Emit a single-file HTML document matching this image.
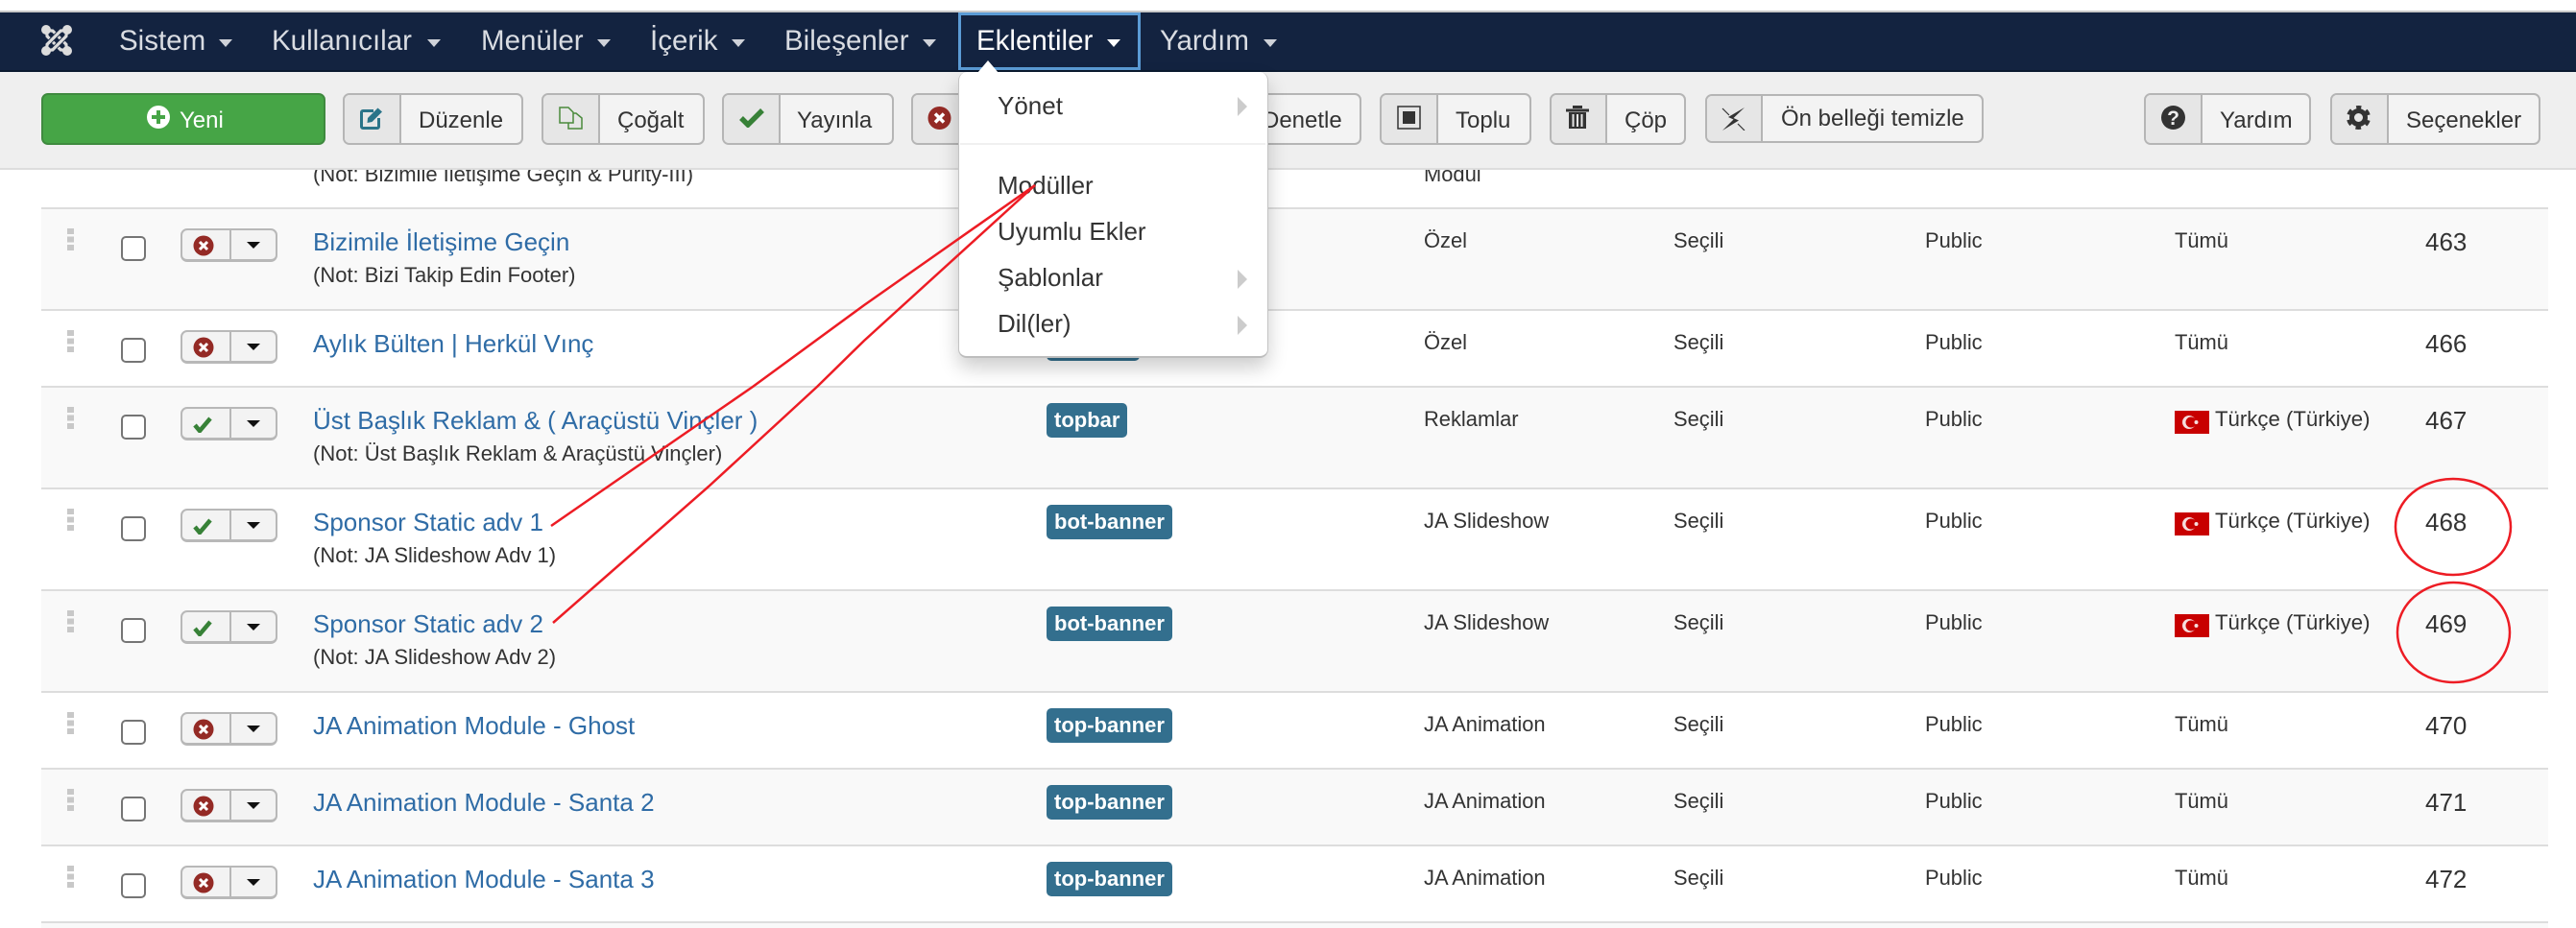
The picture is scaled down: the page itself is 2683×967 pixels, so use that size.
<!DOCTYPE html>
<html lang="tr">
<head>
<meta charset="utf-8">
<title>Modüller</title>
<style>
html,body{margin:0;padding:0;background:#fff}
#p{position:relative;width:2683px;height:967px;overflow:hidden;background:#fff;font-family:"Liberation Sans",Arial,sans-serif;color:#333;white-space:nowrap}
#p div,#p span,#p svg,#p a{position:absolute;display:block}
.nav{left:0;top:11px;width:2683px;height:60px;background:#132340;border-top:2px solid #c9c9c9;border-bottom:2px solid #0b1a30}
.ni{top:23px;height:40px;line-height:40px;font-size:29.5px;color:#d9dce2}
.nc{top:41px;width:0;height:0;border-left:7px solid transparent;border-right:7px solid transparent;border-top:8px solid #cfd2d9}
.tb{left:0;top:75px;width:2683px;height:100px;background:#efefef;border-bottom:2px solid #ddd}
.btn{top:97px;height:50px;background:#f3f3f3;border:2px solid #b5b5b5;border-radius:7px;box-sizing:content-box;overflow:hidden}
.ic{left:0;top:0;height:50px;background:#e6e6e6;border-right:2px solid #b5b5b5}
.bt{top:106px;height:40px;line-height:40px;font-size:24px;color:#333}
.row{left:43px;width:2611px;background:#fff}
.alt{background:#f9f9f9}
.ln{left:43px;width:2611px;height:2px;background:#ddd}
.h{left:27px;top:20px;width:7px;height:6px;background:#c8c8c8;box-shadow:0 8.5px 0 #c8c8c8,0 17px 0 #c8c8c8}
.c{left:83px;top:28px;width:22px;height:22px;border:2px solid #757575;border-radius:5px;background:#fff}
.s{left:145px;top:20px;width:97px;height:30px;border:2px solid #b8b8b8;border-bottom-width:3px;border-radius:7px;background:#f3f3f3}
.d{left:49px;top:0;width:2px;height:30px;background:#b8b8b8}
.ca{left:214px;top:34px;width:0;height:0;border-left:7.5px solid transparent;border-right:7.5px solid transparent;border-top:7.5px solid #111}
.t{left:283px;top:14px;height:40px;line-height:40px;font-size:26px;color:#2f6ca6}
.n{left:283px;top:49px;height:40px;line-height:40px;font-size:22px;color:#333}
.b{left:1047px;top:16px;height:36px;line-height:36px;padding:0 8px;background:#336f8e;border-radius:5px;color:#fff;font-weight:bold;font-size:22px}
.x{top:13px;height:40px;line-height:40px;font-size:21.9px;color:#333}
.x1{left:1440px}.x2{left:1700px}.x3{left:1962px}.x4{left:2222px}.x4f{left:2264px;font-size:22.2px}
.id{left:2483px;top:14px;height:40px;line-height:40px;font-size:26px;color:#333}
.fl{left:2222px;top:24px;width:36px;height:24px}
.dd{left:998px;top:75px;width:321px;height:296px;background:#fff;border-radius:9px;border:1px solid #c4c4c4;border-top:0;border-bottom:2px solid #bdbdbd;box-shadow:0 10px 20px rgba(0,0,0,.2)}
.di{left:1039px;height:40px;line-height:40px;font-size:26px;color:#333}
.da{left:1289px;width:0;height:0;border-top:10px solid transparent;border-bottom:10px solid transparent;border-left:10px solid #ccc}
</style>
</head>
<body>
<div id="p">

<!-- table rows -->
<div class="row" style="top:160px;height:56px"><div class="n" style="top:2px">(Not: Bizimile İletişime Geçin &amp; Purity-III)</div><div class="x x1" style="top:2px">Modül</div></div>
<div class="ln" style="top:216px"></div>

<div class="row alt" style="top:218px;height:104px">
<div class="h"></div><div class="c"></div>
<div class="s"><div class="d"></div><svg style="left:11px;top:5px" width="22" height="22" viewBox="0 0 22 22"><circle cx="11" cy="11" r="10.5" fill="#942a25"/><path d="M7 7l8 8M15 7l-8 8" stroke="#fff" stroke-width="3"/></svg></div><div class="ca"></div>
<a class="t">Bizimile İletişime Geçin</a><div class="n">(Not: Bizi Takip Edin Footer)</div>
<div class="x x1">Özel</div><div class="x x2">Seçili</div><div class="x x3">Public</div><div class="x x4">Tümü</div><div class="id">463</div>
</div>
<div class="ln" style="top:322px"></div>

<div class="row" style="top:324px;height:78px">
<div class="h"></div><div class="c"></div>
<div class="s"><div class="d"></div><svg style="left:11px;top:5px" width="22" height="22" viewBox="0 0 22 22"><circle cx="11" cy="11" r="10.5" fill="#942a25"/><path d="M7 7l8 8M15 7l-8 8" stroke="#fff" stroke-width="3"/></svg></div><div class="ca"></div>
<a class="t">Aylık Bülten | Herkül Vınç</a>
<div class="b" style="width:81px">topbar</div>
<div class="x x1">Özel</div><div class="x x2">Seçili</div><div class="x x3">Public</div><div class="x x4">Tümü</div><div class="id">466</div>
</div>
<div class="ln" style="top:402px"></div>

<div class="row alt" style="top:404px;height:104px">
<div class="h"></div><div class="c"></div>
<div class="s"><div class="d"></div><svg style="left:11px;top:8px" width="21" height="17" viewBox="0 0 21 17"><path d="M2 9l5 6L18 2" fill="none" stroke="#378137" stroke-width="4.5"/></svg></div><div class="ca"></div>
<a class="t">Üst Başlık Reklam &amp; ( Araçüstü Vinçler )</a><div class="n">(Not: Üst Başlık Reklam &amp; Araçüstü Vinçler)</div>
<div class="b">topbar</div>
<div class="x x1">Reklamlar</div><div class="x x2">Seçili</div><div class="x x3">Public</div>
<svg class="fl" viewBox="0 0 36 24"><rect width="36" height="24" fill="#c80000"/><circle cx="15" cy="12" r="7" fill="#f6dcdc"/><circle cx="17" cy="12" r="5.5" fill="#c80000"/><circle cx="22.5" cy="12" r="2" fill="#f6dcdc"/></svg>
<div class="x x4f">Türkçe (Türkiye)</div><div class="id">467</div>
</div>
<div class="ln" style="top:508px"></div>

<div class="row" style="top:510px;height:104px">
<div class="h"></div><div class="c"></div>
<div class="s"><div class="d"></div><svg style="left:11px;top:8px" width="21" height="17" viewBox="0 0 21 17"><path d="M2 9l5 6L18 2" fill="none" stroke="#378137" stroke-width="4.5"/></svg></div><div class="ca"></div>
<a class="t">Sponsor Static adv 1</a><div class="n">(Not: JA Slideshow Adv 1)</div>
<div class="b">bot-banner</div>
<div class="x x1">JA Slideshow</div><div class="x x2">Seçili</div><div class="x x3">Public</div>
<svg class="fl" viewBox="0 0 36 24"><rect width="36" height="24" fill="#c80000"/><circle cx="15" cy="12" r="7" fill="#f6dcdc"/><circle cx="17" cy="12" r="5.5" fill="#c80000"/><circle cx="22.5" cy="12" r="2" fill="#f6dcdc"/></svg>
<div class="x x4f">Türkçe (Türkiye)</div><div class="id">468</div>
</div>
<div class="ln" style="top:614px"></div>

<div class="row alt" style="top:616px;height:104px">
<div class="h"></div><div class="c"></div>
<div class="s"><div class="d"></div><svg style="left:11px;top:8px" width="21" height="17" viewBox="0 0 21 17"><path d="M2 9l5 6L18 2" fill="none" stroke="#378137" stroke-width="4.5"/></svg></div><div class="ca"></div>
<a class="t">Sponsor Static adv 2</a><div class="n">(Not: JA Slideshow Adv 2)</div>
<div class="b">bot-banner</div>
<div class="x x1">JA Slideshow</div><div class="x x2">Seçili</div><div class="x x3">Public</div>
<svg class="fl" viewBox="0 0 36 24"><rect width="36" height="24" fill="#c80000"/><circle cx="15" cy="12" r="7" fill="#f6dcdc"/><circle cx="17" cy="12" r="5.5" fill="#c80000"/><circle cx="22.5" cy="12" r="2" fill="#f6dcdc"/></svg>
<div class="x x4f">Türkçe (Türkiye)</div><div class="id">469</div>
</div>
<div class="ln" style="top:720px"></div>

<div class="row" style="top:722px;height:78px">
<div class="h"></div><div class="c"></div>
<div class="s"><div class="d"></div><svg style="left:11px;top:5px" width="22" height="22" viewBox="0 0 22 22"><circle cx="11" cy="11" r="10.5" fill="#942a25"/><path d="M7 7l8 8M15 7l-8 8" stroke="#fff" stroke-width="3"/></svg></div><div class="ca"></div>
<a class="t">JA Animation Module - Ghost</a>
<div class="b">top-banner</div>
<div class="x x1">JA Animation</div><div class="x x2">Seçili</div><div class="x x3">Public</div><div class="x x4">Tümü</div><div class="id">470</div>
</div>
<div class="ln" style="top:800px"></div>

<div class="row alt" style="top:802px;height:78px">
<div class="h"></div><div class="c"></div>
<div class="s"><div class="d"></div><svg style="left:11px;top:5px" width="22" height="22" viewBox="0 0 22 22"><circle cx="11" cy="11" r="10.5" fill="#942a25"/><path d="M7 7l8 8M15 7l-8 8" stroke="#fff" stroke-width="3"/></svg></div><div class="ca"></div>
<a class="t">JA Animation Module - Santa 2</a>
<div class="b">top-banner</div>
<div class="x x1">JA Animation</div><div class="x x2">Seçili</div><div class="x x3">Public</div><div class="x x4">Tümü</div><div class="id">471</div>
</div>
<div class="ln" style="top:880px"></div>

<div class="row" style="top:882px;height:78px">
<div class="h"></div><div class="c"></div>
<div class="s"><div class="d"></div><svg style="left:11px;top:5px" width="22" height="22" viewBox="0 0 22 22"><circle cx="11" cy="11" r="10.5" fill="#942a25"/><path d="M7 7l8 8M15 7l-8 8" stroke="#fff" stroke-width="3"/></svg></div><div class="ca"></div>
<a class="t">JA Animation Module - Santa 3</a>
<div class="b">top-banner</div>
<div class="x x1">JA Animation</div><div class="x x2">Seçili</div><div class="x x3">Public</div><div class="x x4">Tümü</div><div class="id">472</div>
</div>
<div class="ln" style="top:960px"></div>
<div class="row alt" style="top:962px;height:5px"></div>

<!-- toolbar -->
<div class="tb"></div>
<div style="left:43px;top:97px;width:292px;height:50px;background:#46a546;border:2px solid #3f8a3f;border-bottom-width:2px;border-radius:7px"></div>
<svg style="left:153px;top:110px" width="24" height="24" viewBox="0 0 24 24"><circle cx="12" cy="12" r="12" fill="#fff"/><path d="M12 5v14M5 12h14" stroke="#46a546" stroke-width="4"/></svg>
<div class="bt" style="left:187px;color:#fff">Yeni</div>

<div class="btn" style="left:357px;width:184px"><div class="ic" style="width:57px"></div></div>
<svg style="left:375px;top:112px" width="24" height="23" viewBox="0 0 24 23"><path d="M14 3.5H3a1.5 1.5 0 0 0-1.500 1.500v15A1.5 1.5 0 0 0 3 21.500h15a1.5 1.5 0 0 0 1.500-1.500V11" fill="none" stroke="#2a7489" stroke-width="3"/><path d="M8 11L18.500 .5l4.500 4L12.500 15 7.500 16z" fill="#2a7489"/></svg>
<div class="bt" style="left:436px">Düzenle</div>

<div class="btn" style="left:564px;width:166px"><div class="ic" style="width:57px"></div></div>
<svg style="left:582px;top:111px" width="26" height="24" viewBox="0 0 26 24"><path d="M1 1h9l5 5v11H1zM15 7h3l6 5v11H10v-6" fill="none" stroke="#4a8a3c" stroke-width="1.5"/></svg>
<div class="bt" style="left:643px">Çoğalt</div>

<div class="btn" style="left:752px;width:175px"><div class="ic" style="width:57px"></div></div>
<svg style="left:770px;top:113px" width="26" height="20" viewBox="0 0 26 20"><path d="M2 10l7 7L24 2" fill="none" stroke="#378137" stroke-width="5.500"/></svg>
<div class="bt" style="left:830px">Yayınla</div>

<div class="btn" style="left:949px;width:300px"><div class="ic" style="width:57px"></div></div>
<svg style="left:966px;top:111px" width="25" height="24" viewBox="0 0 25 24"><circle cx="12.500" cy="12" r="12" fill="#942a25"/><path d="M8 7.500l9 9M17 7.500l-9 9" stroke="#fff" stroke-width="3.500"/></svg>

<div class="btn" style="left:1200px;width:214px"></div>
<div class="bt" style="left:1315px">Denetle</div>

<div class="btn" style="left:1437px;width:154px"><div class="ic" style="width:57px"></div></div>
<svg style="left:1455px;top:110px" width="25" height="25" viewBox="0 0 25 25"><rect x="1" y="1" width="23" height="23" fill="none" stroke="#333" stroke-width="1.500"/><rect x="6" y="6" width="13" height="13" fill="#333"/></svg>
<div class="bt" style="left:1516px">Toplu</div>

<div class="btn" style="left:1614px;width:138px"><div class="ic" style="width:56px"></div></div>
<svg style="left:1631px;top:110px" width="24" height="24" viewBox="0 0 24 24"><path d="M0 5h24" stroke="#333" stroke-width="3"/><path d="M8 3V1h8v2" fill="#333" stroke="#333" stroke-width="2"/><path d="M3 7h18v17H3z" fill="#333"/><path d="M7.500 9v13M12 9v13M16.500 9v13" stroke="#e6e6e6" stroke-width="2"/></svg>
<div class="bt" style="left:1692px">Çöp</div>

<div class="btn" style="left:1776px;top:98px;width:286px;height:47px"><div class="ic" style="width:56px;height:47px"></div></div>
<svg style="left:1793px;top:112px" width="25" height="24" viewBox="0 0 25 24"><path d="M1 1l7 7M17 17l7 7" stroke="#333" stroke-width="1.200" fill="none"/><path d="M24 0L7 10l5.500 2.500L1 24l17-10.500L12.500 11z" fill="#333"/></svg>
<div class="bt" style="left:1855px;top:104px">Ön belleği temizle</div>

<div class="btn" style="left:2233px;width:170px"><div class="ic" style="width:57px"></div></div>
<svg style="left:2251px;top:110px" width="25" height="25" viewBox="0 0 25 25"><circle cx="12.500" cy="12.500" r="12.500" fill="#333"/><text x="12.500" y="20" text-anchor="middle" font-family="Liberation Sans,sans-serif" font-weight="bold" font-size="21" fill="#eee">?</text></svg>
<div class="bt" style="left:2312px">Yardım</div>

<div class="btn" style="left:2427px;width:215px"><div class="ic" style="width:57px"></div></div>
<svg style="left:2444px;top:110px" width="25" height="25" viewBox="0 0 25 25"><circle cx="12.500" cy="12.500" r="7" fill="none" stroke="#333" stroke-width="5"/><circle cx="12.500" cy="12.500" r="10.500" fill="none" stroke="#333" stroke-width="4" stroke-dasharray="5.500 5.500" stroke-dashoffset="2.750" transform="rotate(-90 12.500 12.500)"/></svg>
<div class="bt" style="left:2506px">Seçenekler</div>

<!-- nav -->
<div class="nav"></div>
<svg style="left:43px;top:26px" width="32" height="32" viewBox="0 0 32 32">
<g fill="none" stroke="#dcdcdc" stroke-width="3.200"><path d="M5.500 5.500L11.800 6.100 25.900 20.200 26.500 26.500"/><path d="M5.500 5.500L6.100 11.800 20.200 25.900 26.500 26.500"/></g>
<g fill="none" stroke="#132340" stroke-width="5"><path d="M20.200 6.100L6.100 20.200"/><path d="M25.900 11.800L11.800 25.900"/></g>
<g fill="none" stroke="#dcdcdc" stroke-width="3.200"><path d="M26.500 5.500L20.200 6.100 6.100 20.200 5.500 26.500"/><path d="M26.500 5.500L25.900 11.800 11.800 25.900 5.500 26.500"/></g>
<g fill="#dcdcdc"><circle cx="5" cy="5" r="5"/><circle cx="27" cy="5" r="5"/><circle cx="5" cy="27" r="5"/><circle cx="27" cy="27" r="5"/></g>
</svg>
<div class="ni" style="left:124px">Sistem</div><div class="nc" style="left:228px"></div>
<div class="ni" style="left:283px">Kullanıcılar</div><div class="nc" style="left:445px"></div>
<div class="ni" style="left:501px">Menüler</div><div class="nc" style="left:622px"></div>
<div class="ni" style="left:677px">İçerik</div><div class="nc" style="left:762px"></div>
<div class="ni" style="left:817px">Bileşenler</div><div class="nc" style="left:961px"></div>
<div style="left:998px;top:13px;width:184px;height:54px;border:3px solid #5b9bd5"></div>
<div class="ni" style="left:1017px;color:#fff">Eklentiler</div><div class="nc" style="left:1153px;border-top-color:#fff"></div>
<div class="ni" style="left:1208px">Yardım</div><div class="nc" style="left:1316px"></div>

<!-- dropdown -->
<div class="dd"></div>
<div style="left:1018px;top:63px;width:0;height:0;border-left:11px solid transparent;border-right:11px solid transparent;border-bottom:13px solid #fff"></div>
<div class="di" style="top:90px">Yönet</div><div class="da" style="top:101px"></div>
<div style="left:1000px;top:149px;width:318px;height:2px;background:#f0f0f0"></div>
<div class="di" style="top:173px">Modüller</div>
<div class="di" style="top:221px">Uyumlu Ekler</div>
<div class="di" style="top:269px">Şablonlar</div><div class="da" style="top:281px"></div>
<div class="di" style="top:317px">Dil(ler)</div><div class="da" style="top:329px"></div>

<!-- annotations -->
<svg style="left:0;top:0" width="2683" height="967" viewBox="0 0 2683 967">
<g fill="none" stroke="#ed1c24" stroke-width="2.500">
<path d="M1078 193L900 318 784 403 626 512 574 548"/>
<path d="M1078 193L900 355 851 403 738 507 576 649"/>
<ellipse cx="2555" cy="549" rx="60" ry="50"/>
<ellipse cx="2555.500" cy="659" rx="58.500" ry="52"/>
</g>
</svg>
</div>
</body>
</html>
